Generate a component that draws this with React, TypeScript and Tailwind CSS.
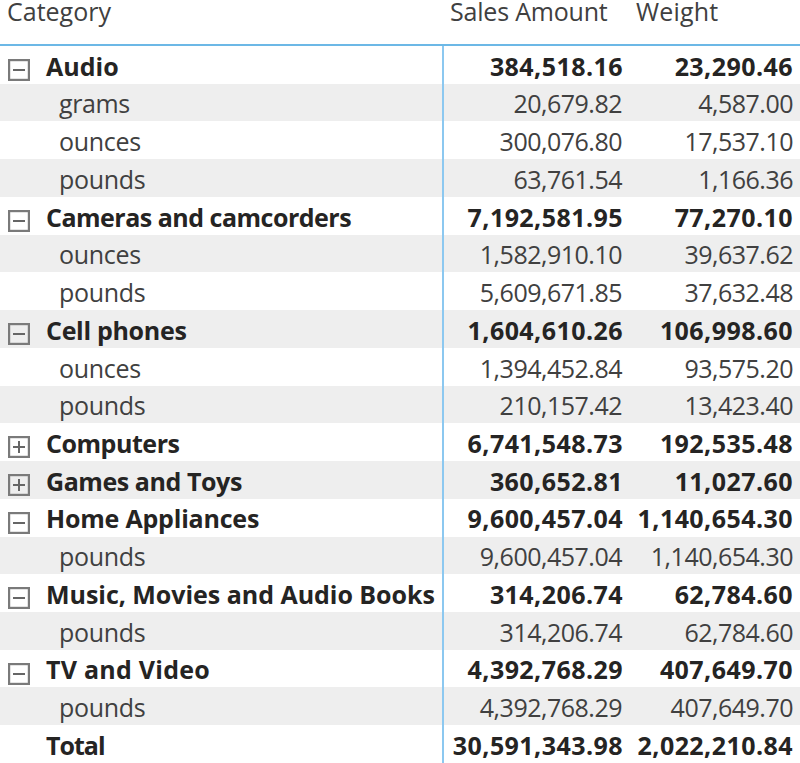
const rows: [string, string, string, number, string, string?][] = [
  ["Audio", "384,518.16", "23,290.46", 0, "tracking-[0px]", "minus"],
  ["grams", "20,679.82", "4,587.00", 1, "tracking-[-0.4px]"],
  ["ounces", "300,076.80", "17,537.10", 1, "tracking-[-0.3px]"],
  ["pounds", "63,761.54", "1,166.36", 1, "tracking-[-0.3px]"],
  ["Cameras and camcorders", "7,192,581.95", "77,270.10", 0, "tracking-[-0.5px]", "minus"],
  ["ounces", "1,582,910.10", "39,637.62", 1, "tracking-[-0.3px]"],
  ["pounds", "5,609,671.85", "37,632.48", 1, "tracking-[-0.3px]"],
  ["Cell phones", "1,604,610.26", "106,998.60", 0, "tracking-[-0.3px]", "minus"],
  ["ounces", "1,394,452.84", "93,575.20", 1, "tracking-[-0.3px]"],
  ["pounds", "210,157.42", "13,423.40", 1, "tracking-[-0.3px]"],
  ["Computers", "6,741,548.73", "192,535.48", 0, "tracking-[-0.45px]", "plus"],
  ["Games and Toys", "360,652.81", "11,027.60", 0, "tracking-[-0.43px]", "plus"],
  ["Home Appliances", "9,600,457.04", "1,140,654.30", 0, "tracking-[-0.2px]", "minus"],
  ["pounds", "9,600,457.04", "1,140,654.30", 1, "tracking-[-0.3px]"],
  ["Music, Movies and Audio Books", "314,206.74", "62,784.60", 0, "tracking-[-0.03px]", "minus"],
  ["pounds", "314,206.74", "62,784.60", 1, "tracking-[-0.3px]"],
  ["TV and Video", "4,392,768.29", "407,649.70", 0, "tracking-[0.25px]", "minus"],
  ["pounds", "4,392,768.29", "407,649.70", 1, "tracking-[-0.3px]"],
  ["Total", "30,591,343.98", "2,022,210.84", 0, "tracking-[-1px]"],
];

function Toggle({ kind }: { kind: string }) {
  return (
    <svg width="22" height="22" viewBox="0 0 22 22" className="absolute left-[8px] top-[13px]">
      <rect x="1" y="1" width="20" height="20" fill="none" stroke="#7a7a7a" strokeWidth="2.4" />
      <path d="M5 11H17" stroke="#666666" strokeWidth="2" />
      {kind === "plus" && <path d="M11 5V17" stroke="#666666" strokeWidth="2" />}
    </svg>
  );
}

export default function App() {
  return (
    <div className="w-[800px] h-[763px] overflow-hidden bg-white text-[#252423] text-[25px] font-['Open_Sans','Noto_Sans',sans-serif]">
      <div className="flex h-[46px] border-b-2 border-[#6cb8e6] text-[#404040] leading-[22px]">
        <div className="w-[450px] pl-[7px]">Category</div>
        <div className="w-[157px] whitespace-nowrap tracking-[-0.2px]">Sales Amount</div>
        <div className="pl-[29px] tracking-[0.2px]">Weight</div>
      </div>
      <div className="relative">
        {rows.map((r, i) => (
          <div
            key={i}
            className={`relative flex items-center h-[37.74px] pt-[3px] ${i % 2 === 1 ? "bg-[#eeeeee]" : "bg-white"} ${r[3] === 0 ? "font-bold" : "text-[#404040]"}`}
          >
            {r[5] && <Toggle kind={r[5]} />}
            <div className={`w-[444px] whitespace-nowrap ${r[4]} ${r[3] === 0 ? "pl-[46px]" : "pl-[59px]"}`}>{r[0]}</div>
            <div className={`text-right whitespace-nowrap ${r[3] === 0 ? "w-[179px] tracking-[0.45px]" : "w-[178px] tracking-[-0.5px]"}`}>{r[1]}</div>
            <div className={`text-right whitespace-nowrap ${r[3] === 0 ? "w-[170px] tracking-[0.45px]" : "w-[171px] tracking-[-0.5px]"}`}>{r[2]}</div>
          </div>
        ))}
        <div className="absolute left-[442px] top-0 bottom-0 w-[2px] bg-[#8cc8f0]" />
      </div>
    </div>
  );
}
